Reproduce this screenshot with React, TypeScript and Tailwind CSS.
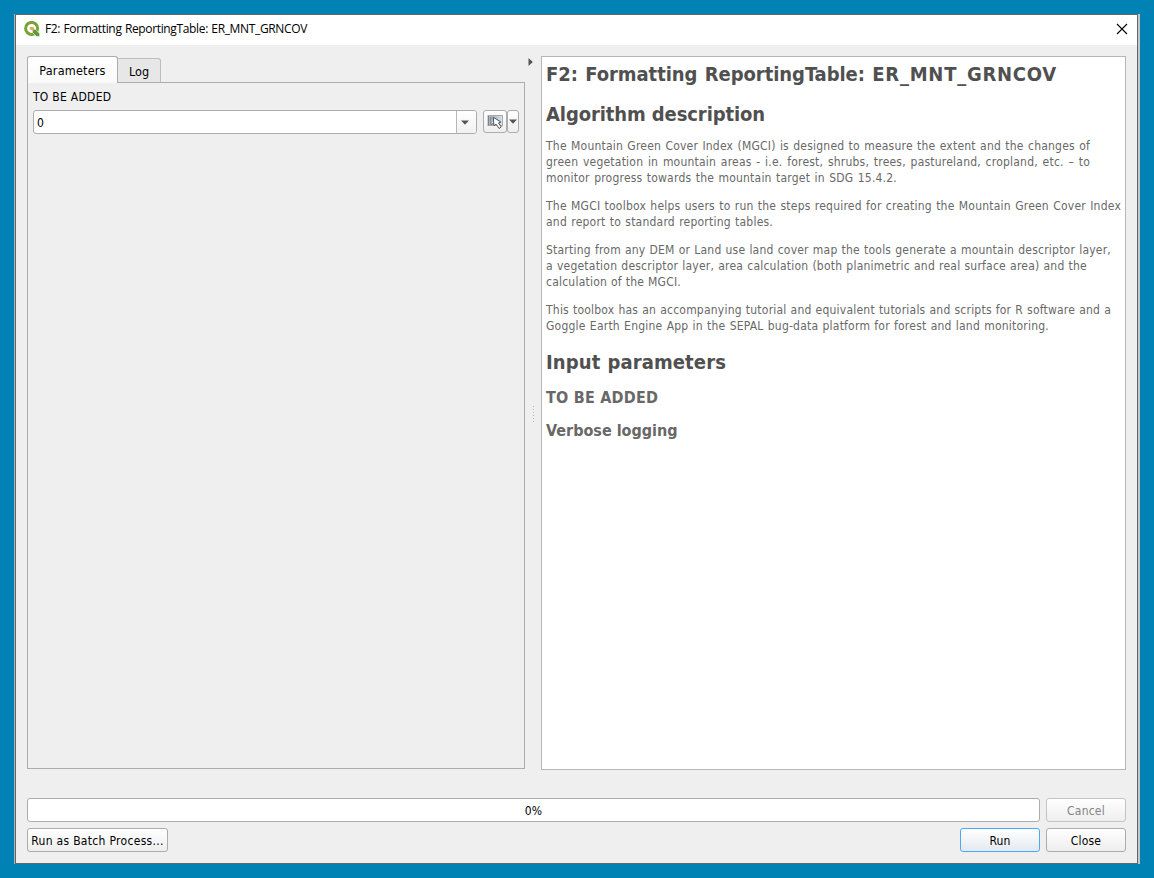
import type { ReactNode } from "react";

const UI = "font-['DejaVu_Sans_Condensed','DejaVu_Sans',sans-serif] [font-stretch:condensed]";

function Line({ w, children }: { w: string; children: ReactNode }) {
  return (
    <span className={`block whitespace-nowrap text-justify [text-align-last:justify] ${w}`}>
      {children}
    </span>
  );
}

function Caret() {
  return (
    <svg width="8" height="5" viewBox="0 0 8 5" className="block shrink-0">
      <path d="M0 0.5h8L4 4.8z" fill="#555" />
    </svg>
  );
}

function QgisLogo() {
  return (
    <svg width="16" height="16" viewBox="0 0 16 16" className="block shrink-0">
      <circle cx="7.6" cy="7.4" r="6" fill="none" stroke="#76a534" strokeWidth="3" />
      <path d="M8.4 8.2h3.1l4.2 4.3v3.1h-3.2L8.4 11.4z" fill="#5d9b3a" stroke="#fff" strokeWidth="0.6" />
      <path d="M5.8 6h3.4l.8.8v2.4H8.2L5.8 8.2z" fill="#f0a25c" />
    </svg>
  );
}

function PickIcon() {
  return (
    <svg width="17" height="16" viewBox="0 0 17 16" className="block shrink-0">
      <defs>
        <linearGradient id="pick" x1="0" x2="1">
          <stop offset="0" stopColor="#a6b1bb" />
          <stop offset="0.5" stopColor="#a9bfd9" />
          <stop offset="1" stopColor="#e4e4e4" />
        </linearGradient>
      </defs>
      <rect x="1" y="1.5" width="14.5" height="10" fill="url(#pick)" stroke="#a9a9a9" />
      <path d="M1.5 2v9.5" stroke="#77828d" />
      <path d="M4 3v8l2-1.6" fill="#e8e8e8" stroke="#666" strokeWidth="0.9" />
      <path d="M6.3 3.3l.6 8.4 2.2-1.5 3 4.3 2.2-1.6-2.9-3.9 2.5-1z" fill="#fff" stroke="#555" strokeWidth="1" />
    </svg>
  );
}

const button =
  "flex h-6 items-center justify-center rounded-[3px] border bg-linear-to-b from-white to-[#eeeeee] pt-[2px]";

export default function App() {
  return (
    <div className={`flex h-[878px] w-[1154px] bg-[#0083b4] pl-[14px] pt-[14px] text-[12px] ${UI}`}>
      <div className="flex h-[850px] w-[1126px] border-l border-r-2 border-l-[#a9b6bc] border-r-[#c3c7c9]">
        <div className="flex w-[1123px] flex-col border border-[#646669] bg-[#efefef]">
          <header className="flex h-[30px] shrink-0 items-center bg-white pb-[2px] pl-2 pr-[9px]">
            <QgisLogo />
            <h1 className="ml-[5px] font-['Open_Sans','Noto_Sans',sans-serif] text-[12px] tracking-[-0.35px] text-black [font-stretch:normal]">
              <Line w="w-[262px]">F2: Formatting ReportingTable: ER_MNT_GRNCOV</Line>
            </h1>
            <svg width="12" height="12" viewBox="0 0 12 12" className="ml-auto block">
              <path d="M1 1l10 10M11 1L1 11" stroke="#000" strokeWidth="1.1" />
            </svg>
          </header>

          <main className="flex h-[725px] shrink-0 pl-[11px] pt-[11px]">
            <section className="flex w-[498px] flex-col">
              <div className="flex h-[26px] shrink-0 items-end">
                <div className="z-10 -mb-px flex h-[27px] w-[91px] items-center justify-center rounded-t-[3px] border border-b-0 border-[#acacac] bg-linear-to-b from-white to-[#fafafa] pt-[2px] text-[12.5px] tracking-[0.2px]">
                  Parameters
                </div>
                <div className="flex h-6 w-[43px] items-center justify-center rounded-tr-[3px] border border-b-0 border-l-0 border-[#bdbdbd] bg-[#e7e7e7] pt-1 text-[12.5px]">
                  Log
                </div>
              </div>
              <div className="h-[687px] shrink-0 border border-[#acacac] px-[5px] pt-[6px]">
                <div className="h-[21px] leading-4 text-black">
                  <span className="block whitespace-nowrap tracking-[0.28px]">TO BE ADDED</span>
                </div>
                <div className="flex">
                  <div className="flex h-6 w-[444px] rounded-[3px] border border-[#acacac] bg-white">
                    <span className="flex flex-1 items-center pl-[3px] pt-px">0</span>
                    <span className="flex w-5 items-center justify-center rounded-r-[2px] border-l border-[#b8b8b8] bg-linear-to-b from-white to-[#f1f1f1] pr-[3px]">
                      <Caret />
                    </span>
                  </div>
                  <div className="ml-[6px] flex h-[23px] w-[24px] items-center justify-center rounded-[3px] border border-[#acacac] bg-linear-to-b from-white to-[#eee]">
                    <PickIcon />
                  </div>
                  <div className="flex h-[23px] w-[12px] items-center justify-center rounded-[3px] border border-[#acacac] bg-linear-to-b from-white to-[#eee]">
                    <Caret />
                  </div>
                </div>
              </div>
            </section>

            <div className="flex w-4 shrink-0 flex-col items-center pt-[2px]">
              <svg width="5" height="8" viewBox="0 0 5 8" className="ml-[-5px] block">
                <path d="M0.5 0v8L4.8 4z" fill="#555" />
              </svg>
              <svg width="2" height="18" viewBox="0 0 2 18" className="ml-[2px] mt-[340px] block">
                <path d="M.5 0v18" stroke="#b5b5b5" strokeDasharray="1 2" />
              </svg>
            </div>

            <article className="h-[714px] w-[585px] shrink-0 border border-[#b6b6b6] bg-white pl-1 pt-1 leading-4 tracking-[0.22px] text-[#686868]">
              <h2 className="h-[26px] text-[20px] font-bold leading-[26px] tracking-[-0.05px] text-[#505050]">
                <Line w="w-[511px]">
                  F2: Formatting ReportingTable: <span className="tracking-[0.75px]">ER_MNT_GRNCOV</span>
                </Line>
              </h2>
              <h2 className="mt-[14px] h-[26px] text-[20px] font-bold leading-[26px] tracking-[-0.1px] text-[#505050]"><Line w="w-[219px]">Algorithm description</Line></h2>
              <p className="mt-[11px]">
                <Line w="w-[544px]">The Mountain Green Cover Index (MGCI) is designed to measure the extent and the changes of</Line>
                <Line w="w-[544px]">green vegetation in mountain areas - i.e. forest, shrubs, trees, pastureland, cropland, etc. – to</Line>
                <Line w="w-[351px]">monitor progress towards the mountain target in SDG 15.4.2.</Line>
              </p>
              <p className="mt-3">
                <Line w="w-[575px]">The MGCI toolbox helps users to run the steps required for creating the Mountain Green Cover Index</Line>
                <Line w="w-[227px]">and report to standard reporting tables.</Line>
              </p>
              <p className="mt-3">
                <Line w="w-[565px]">Starting from any DEM or Land use land cover map the tools generate a mountain descriptor layer,</Line>
                <Line w="w-[541px]">a vegetation descriptor layer, area calculation (both planimetric and real surface area) and the</Line>
                <Line w="w-[135px]">calculation of the MGCI.</Line>
              </p>
              <p className="mt-3">
                <Line w="w-[565px]">This toolbox has an accompanying tutorial and equivalent tutorials and scripts for R software and a</Line>
                <Line w="w-[503px]">Goggle Earth Engine App in the SEPAL bug-data platform for forest and land monitoring.</Line>
              </p>
              <h2 className="mt-[15px] h-[26px] text-[20px] font-bold leading-[26px] tracking-[0.12px] text-[#505050]"><Line w="w-[180px]">Input parameters</Line></h2>
              <h3 className="mt-[13px] h-5 text-[16px] font-bold leading-5"><Line w="w-[112px]">TO BE ADDED</Line></h3>
              <h3 className="mt-[13px] h-5 text-[16px] font-bold leading-5 tracking-normal"><Line w="w-[131px]">Verbose logging</Line></h3>
            </article>
          </main>

          <footer className="flex flex-col gap-[6px] px-[11px] pt-7 tracking-[0.2px]">
            <div className="flex gap-[6px]">
              <div className="flex h-6 w-[1013px] items-center justify-center rounded-[3px] border border-[#acacac] bg-white pt-[2px]">0%</div>
              <button disabled className={`${button} w-20 border-[#c4c4c4] text-[#838383]`}>Cancel</button>
            </div>
            <div className="flex gap-[6px]">
              <button className={`${button} w-[141px] whitespace-nowrap border-[#acacac] tracking-[0.31px]`}>Run as Batch Process...</button>
              <button className="ml-auto flex h-6 w-20 items-center justify-center rounded-[3px] border border-[#49a9f3] bg-linear-to-b from-white to-[#e4e9f0] pt-[2px]">Run</button>
              <button className={`${button} w-20 border-[#acacac]`}>Close</button>
            </div>
          </footer>
        </div>
      </div>
    </div>
  );
}
